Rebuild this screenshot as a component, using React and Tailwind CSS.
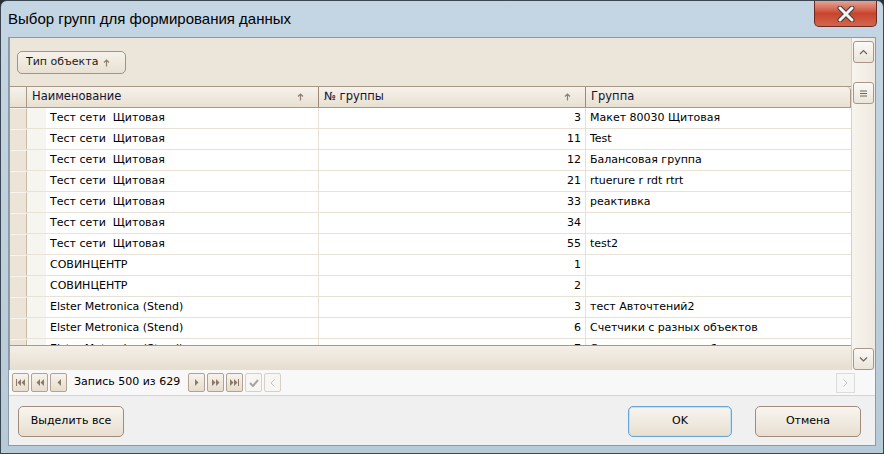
import React from "react";

const rows = [
  ["Тест сети  Щитовая", "3", "Макет 80030 Щитовая"],
  ["Тест сети  Щитовая", "11", "Test"],
  ["Тест сети  Щитовая", "12", "Балансовая группа"],
  ["Тест сети  Щитовая", "21", "rtuerure r rdt rtrt"],
  ["Тест сети  Щитовая", "33", "реактивка"],
  ["Тест сети  Щитовая", "34", ""],
  ["Тест сети  Щитовая", "55", "test2"],
  ["СОВИНЦЕНТР", "1", ""],
  ["СОВИНЦЕНТР", "2", ""],
  ["Elster Metronica (Stend)", "3", "тест Авточтений2"],
  ["Elster Metronica (Stend)", "6", "Счетчики с разных объектов"],
  ["Elster Metronica (Stend)", "7", "Счетчики с разных объектов"],
];

function SortArrow() {
  return (
    <svg width="7" height="8" viewBox="0 0 7 8" className="shrink-0">
      <path d="M3.5 1 V7.5 M1 3.5 L3.5 1 L6 3.5" stroke="#8c7f72" strokeWidth="1.2" fill="none" />
    </svg>
  );
}

function NavBtn({ children, disabled }) {
  return (
    <div
      className={
        "w-[17px] h-[19px] rounded-[2px] border flex items-center justify-center " +
        (disabled
          ? "border-[#d6d0c8] bg-[#f7f6f3]"
          : "border-[#b3a28f] bg-gradient-to-b from-[#f7f3ec] to-[#e6ddce]")
      }
    >
      {children}
    </div>
  );
}

const G = "#8b7a68";

function ScrollBtn({ children }) {
  return (
    <div className="w-[21px] h-[22px] rounded-[3px] border border-[#a8968a] bg-gradient-to-b from-[#fbf9f5] to-[#ebe5da] flex items-center justify-center">
      {children}
    </div>
  );
}

export default function App() {
  const font = { fontFamily: '"DejaVu Sans", Verdana, sans-serif' };
  return (
    <div className="w-[884px] h-[454px] overflow-hidden bg-[#2a2f35]">
      <div className="w-full h-full rounded-t-[7px] border border-[#3c4650] bg-gradient-to-b from-[#c4d6e3] to-[#b7cad8] flex flex-col">
        {/* title bar */}
        <div className="h-[36px] flex items-start justify-between shrink-0">
          <div
            className="pl-[7px] pt-[9px] text-[15px] text-black leading-[18px]"
            style={{ fontFamily: '"Liberation Sans", Arial, sans-serif' }}
          >
            Выбор групп для формирования данных
          </div>
          <div className="mr-[6px] w-[63px] h-[26px] rounded-b-[5px] border border-t-0 border-[#6b2a22] bg-gradient-to-b from-[#e5a394] via-[#c8442d] to-[#d3654d] flex items-center justify-center">
            <svg width="20" height="16" viewBox="0 0 20 16">
              <path d="M4 2 L16 14 M16 2 L4 14" stroke="#3d3d3d" strokeWidth="5" strokeLinecap="round" />
              <path d="M4 2 L16 14 M16 2 L4 14" stroke="#f4f4f4" strokeWidth="3" strokeLinecap="round" />
            </svg>
          </div>
        </div>

        {/* content */}
        <div
          className="mx-[7px] mb-[7px] flex-1 border border-[#8c9aa6] bg-[#f0f0f0] flex flex-col text-[11px] text-black"
          style={font}
        >
          <div className="h-[332px] flex shrink-0">
            {/* grid */}
            <div className="w-[842px] flex flex-col border-l border-[#a79886]">
              <div className="h-[48px] bg-[#ece5d9] flex items-start pl-[7px] pt-[13px] shrink-0">
                <div className="h-[23px] w-[109px] rounded-[5px] border border-[#a7917f] bg-gradient-to-b from-[#f6f2eb] to-[#e8e0d2] flex items-center pl-[8px] gap-[5px] text-[#1a1a1a]">
                  <span>Тип объекта</span>
                  <SortArrow />
                </div>
              </div>
              <div className="h-[22px] flex shrink-0 bg-gradient-to-b from-[#f6f2ec] to-[#e8e0d1] border-t border-b border-[#a89886] text-[#141432] text-[11.5px]">
                <div className="w-[17px] border-r border-[#a89886]" />
                <div className="w-[292px] flex items-center justify-between pl-[5px] pr-[14px] border-r border-[#9c8a78]">
                  <span>Наименование</span>
                  <SortArrow />
                </div>
                <div className="w-[267px] flex items-center justify-between pl-[5px] pr-[14px] border-r border-[#9c8a78]">
                  <span>№ группы</span>
                  <SortArrow />
                </div>
                <div className="w-[265px] flex items-center pl-[5px] rounded-tr-[4px] border-r border-[#a89886]">
                  <span>Группа</span>
                </div>
              </div>
              <div className="flex-1 overflow-hidden bg-white">
                {rows.map((r, i) => (
                  <div key={i} className="h-[21px] flex border-b border-[#e8e2d6]">
                    <div className="w-[17px] bg-[#ebe4d7] border-r border-[#c9bca9] border-t border-t-[#f8f5ef]" />
                    <div className="w-[19px] bg-[#f7f5f0]" />
                    <div className="w-[273px] pl-[4px] flex items-center whitespace-pre border-r border-[#e8e2d6]">
                      {r[0]}
                    </div>
                    <div className="w-[267px] pr-[4px] flex items-center justify-end border-r border-[#e8e2d6]">
                      {r[1]}
                    </div>
                    <div className="w-[265px] pl-[4px] flex items-center">{r[2]}</div>
                  </div>
                ))}
              </div>
              <div className="h-[25px] shrink-0 border-t border-[#a89886] bg-gradient-to-b from-[#f4efe7] to-[#e6ded0]" />
            </div>
            {/* vertical scrollbar */}
            <div className="w-[24px] bg-gradient-to-r from-[#f7f4ee] to-[#efe9df] border-l border-[#d8d0c4] flex flex-col items-center pt-[3px] pb-0">
              <ScrollBtn>
                <svg width="9" height="6" viewBox="0 0 9 6">
                  <path d="M1 5 L4.5 1.5 L8 5" stroke="#6f6258" strokeWidth="1.2" fill="none" />
                </svg>
              </ScrollBtn>
              <div className="h-[19px]" />
              <ScrollBtn>
                <svg width="9" height="7" viewBox="0 0 9 7">
                  <path d="M1 1 H8 M1 3.5 H8 M1 6 H8" stroke="#6f6258" strokeWidth="1" />
                </svg>
              </ScrollBtn>
              <div className="flex-1" />
              <ScrollBtn>
                <svg width="9" height="6" viewBox="0 0 9 6">
                  <path d="M1 1.5 L4.5 5 L8 1.5" stroke="#6f6258" strokeWidth="1.2" fill="none" />
                </svg>
              </ScrollBtn>
            </div>
          </div>

          {/* navigator */}
          <div className="h-[26px] shrink-0 bg-[#f8f8f8] border-b border-[#d4d4d4] flex items-center pl-[3px] pr-[20px]">
            <div className="flex items-center gap-[2px]">
              <NavBtn>
                <svg width="9" height="7" viewBox="0 0 9 7">
                  <path d="M0.5 0 V7" stroke={G} />
                  <path d="M5 0 L1.5 3.5 L5 7 Z M9 0 L5.5 3.5 L9 7 Z" fill={G} />
                </svg>
              </NavBtn>
              <NavBtn>
                <svg width="8" height="7" viewBox="0 0 8 7">
                  <path d="M4 0 L0.5 3.5 L4 7 Z M8 0 L4.5 3.5 L8 7 Z" fill={G} />
                </svg>
              </NavBtn>
              <NavBtn>
                <svg width="4" height="7" viewBox="0 0 4 7">
                  <path d="M4 0 L0.5 3.5 L4 7 Z" fill={G} />
                </svg>
              </NavBtn>
            </div>
            <div className="pl-[7px] pr-[8px]">Запись 500 из 629</div>
            <div className="flex items-center gap-[2px]">
              <NavBtn>
                <svg width="4" height="7" viewBox="0 0 4 7">
                  <path d="M0 0 L3.5 3.5 L0 7 Z" fill={G} />
                </svg>
              </NavBtn>
              <NavBtn>
                <svg width="8" height="7" viewBox="0 0 8 7">
                  <path d="M0 0 L3.5 3.5 L0 7 Z M4 0 L7.5 3.5 L4 7 Z" fill={G} />
                </svg>
              </NavBtn>
              <NavBtn>
                <svg width="9" height="7" viewBox="0 0 9 7">
                  <path d="M0 0 L3.5 3.5 L0 7 Z M4 0 L7.5 3.5 L4 7 Z" fill={G} />
                  <path d="M8.5 0 V7" stroke={G} />
                </svg>
              </NavBtn>
              <NavBtn disabled>
                <svg width="10" height="8" viewBox="0 0 10 8">
                  <path d="M1 4 L4 7 L9 1" stroke="#a5a5a5" strokeWidth="2" fill="none" />
                </svg>
              </NavBtn>
              <NavBtn disabled>
                <svg width="5" height="8" viewBox="0 0 5 8">
                  <path d="M4.5 0.5 L1 4 L4.5 7.5" stroke="#c2c2c2" strokeWidth="1" fill="none" />
                </svg>
              </NavBtn>
            </div>
            <div className="flex-1" />
            <div className="w-[19px] h-[20px] border border-[#dcdcdc] bg-[#f7f7f7] flex items-center justify-center">
              <svg width="5" height="8" viewBox="0 0 5 8">
                <path d="M0.5 0.5 L4 4 L0.5 7.5" stroke="#c2c2c2" strokeWidth="1" fill="none" />
              </svg>
            </div>
          </div>

          {/* buttons */}
          <div className="flex-1 flex items-center justify-between pl-[9px] pr-[14px] pt-[1px]">
            <div className="w-[106px] h-[31px] rounded-[5px] border border-[#9f8c7c] bg-gradient-to-b from-[#f8f5ef] to-[#e8dfd0] flex items-center justify-center">
              Выделить все
            </div>
            <div className="flex gap-[23px]">
              <div className="w-[104px] h-[31px] rounded-[5px] border border-[#67a5d8] bg-gradient-to-b from-[#f8f5ef] to-[#e8dfd0] shadow-[inset_0_0_0_1px_#bfe0f5] flex items-center justify-center">
                OK
              </div>
              <div className="w-[106px] h-[31px] rounded-[5px] border border-[#9f8c7c] bg-gradient-to-b from-[#f8f5ef] to-[#e8dfd0] flex items-center justify-center">
                Отмена
              </div>
            </div>
          </div>
        </div>
      </div>
    </div>
  );
}
